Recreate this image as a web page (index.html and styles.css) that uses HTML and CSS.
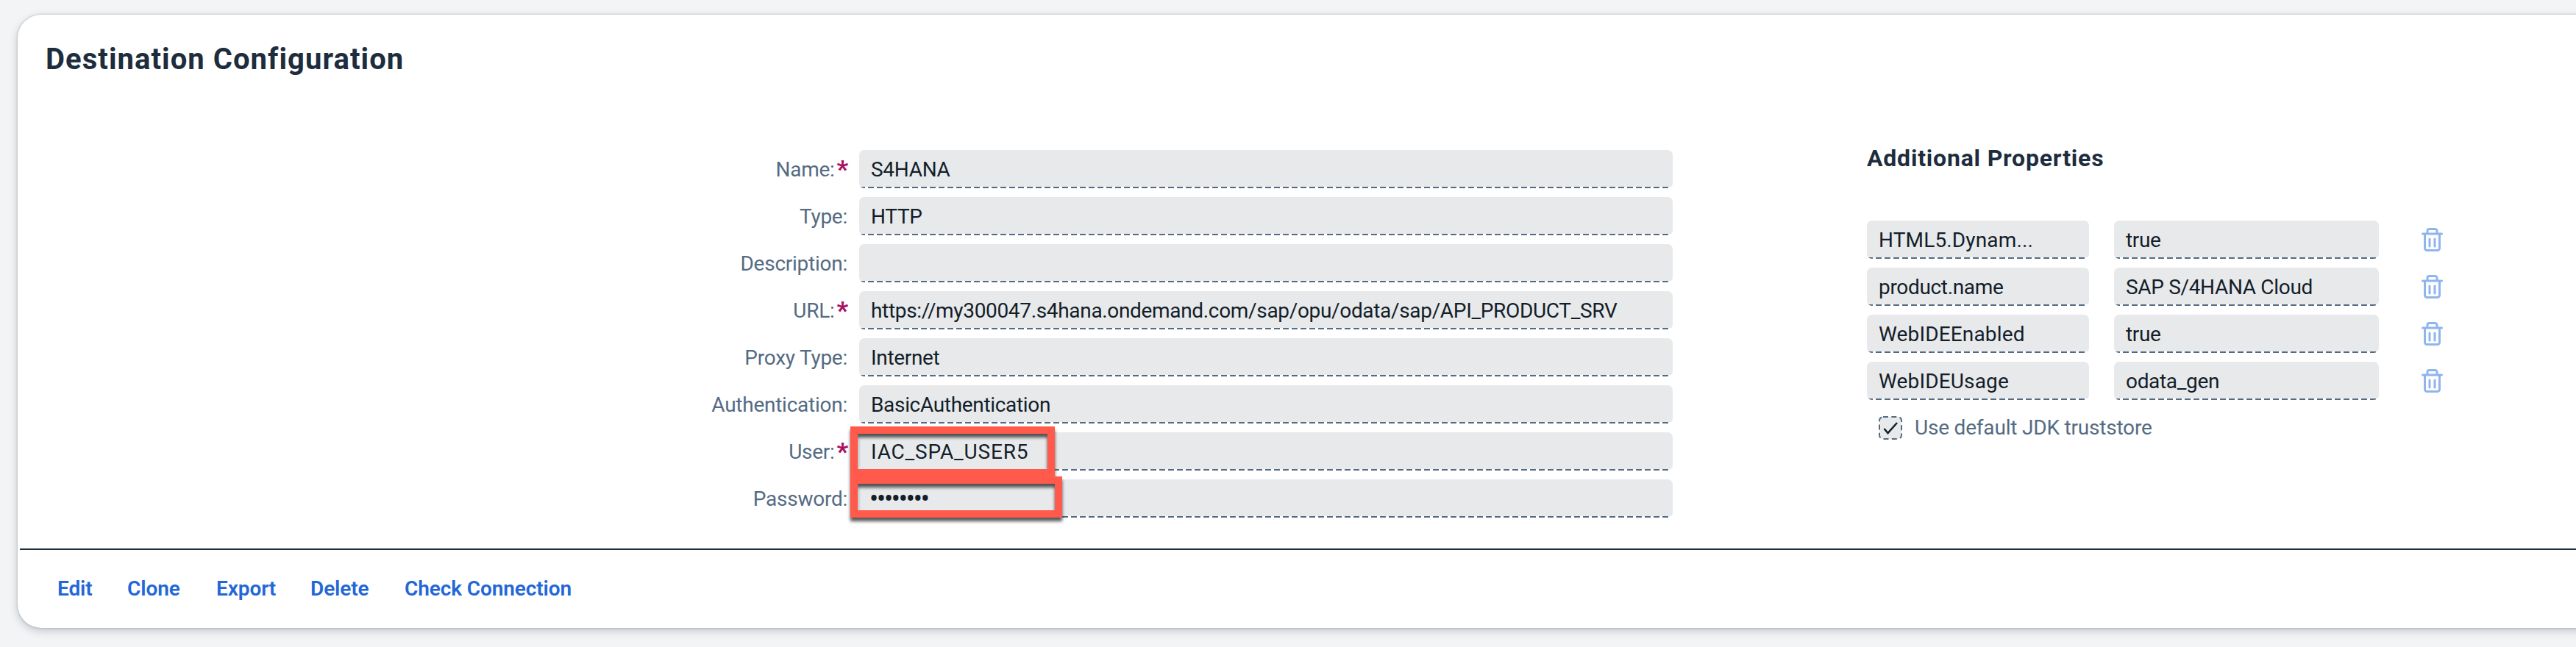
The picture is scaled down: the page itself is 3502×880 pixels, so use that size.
FILE: index.html
```html
<!DOCTYPE html>
<html lang="en">
<head>
<meta charset="utf-8">
<title>Destination Configuration</title>
<link rel="stylesheet" href="styles.css">
</head>
<body>
<svg class="defs" width="0" height="0" aria-hidden="true">
  <symbol id="trash" viewBox="0 0 30 32">
    <path d="M8 8V4a2.500 2.500 0 0 1 2.500-2.500h8A2.500 2.500 0 0 1 21 4v4M1.500 8h26M4.500 8v19.500a3 3 0 0 0 3 3h14a3 3 0 0 0 3-3V8M11 15v10M18 15v10" fill="none" stroke="currentColor" stroke-width="3" stroke-linecap="round"/>
  </symbol>
</svg>
<main class="card">
  <h1 class="title">Destination Configuration</h1>
  <div class="content">
    <section class="form">
      <label class="label required">Name:</label><div class="field caps">S4HANA</div>
      <label class="label">Type:</label><div class="field caps">HTTP</div>
      <label class="label">Description:</label><div class="field"></div>
      <label class="label required">URL:</label><div class="field">https://my300047.s4hana.ondemand.com/sap/opu/odata/sap/API_PRODUCT_SRV</div>
      <label class="label">Proxy Type:</label><div class="field">Internet</div>
      <label class="label">Authentication:</label><div class="field">BasicAuthentication</div>
      <label class="label required">User:</label><div class="field user">IAC_SPA_USER5<span class="mark mark-user"></span></div>
      <label class="label">Password:</label><div class="field password">••••••••<span class="mark mark-password"></span></div>
    </section>
    <section class="props">
      <h2 class="subtitle">Additional Properties</h2>
      <div class="prop-grid">
        <div class="field wide">HTML5.Dynam...</div><div class="field">true</div><svg class="trash"><use href="#trash"/></svg>
        <div class="field">product.name</div><div class="field">SAP S/4HANA Cloud</div><svg class="trash"><use href="#trash"/></svg>
        <div class="field wide">WebIDEEnabled</div><div class="field">true</div><svg class="trash"><use href="#trash"/></svg>
        <div class="field wide">WebIDEUsage</div><div class="field">odata_gen</div><svg class="trash"><use href="#trash"/></svg>
      </div>
      <div class="check">
        <svg class="box" viewBox="0 0 32 32">
          <rect x="1" y="1" width="30" height="30" rx="5" fill="#e8e9eb" stroke="#556b82" stroke-width="2" stroke-dasharray="7 4.300"/>
          <path d="M7.500 17l5 6L25 9" fill="none" stroke="#131e29" stroke-width="2.500"/>
        </svg>
        <span>Use default JDK truststore</span>
      </div>
    </section>
  </div>
  <footer class="actions">
    <a class="edit">Edit</a><a class="clone">Clone</a><a class="export">Export</a><a class="delete">Delete</a><a>Check Connection</a>
  </footer>
</main>
</body>
</html>
```
FILE: styles.css
```css
* { box-sizing: border-box; }
body {
  margin: 0;
  height: 880px;
  padding: 20px 0 0 24px;
  overflow: hidden;
  background: #f3f4f6;
  font: 28px/53px Roboto, "Open Sans", sans-serif;
  color: #1d2d3e;
}
.defs { display: block; height: 0; }
.card {
  height: 834px;
  margin-right: -20px;
  display: flex;
  flex-direction: column;
  border-radius: 32px 0 0 32px;
  background: #fff;
  box-shadow: 0 0 3px rgba(34, 53, 72, .3), 0 4px 12px rgba(34, 53, 72, .24);
}
.title {
  margin: 0;
  height: 184px;
  padding: 34px 0 0 38px;
  font-size: 40px;
  line-height: 53px;
  letter-spacing: 1.050px;
}
.content {
  display: flex;
  align-items: flex-start;
  gap: 264px;
  padding-left: 904px;
  height: 541px;
}
.form {
  display: grid;
  grid-template-columns: 225px 1106px;
  grid-auto-rows: 52px;
  column-gap: 15px;
  row-gap: 12px;
}
.label {
  text-align: right;
  color: #556b82;
  letter-spacing: -.25px;
  margin-right: 1px;
}
.required::after {
  content: "*";
  display: inline-block;
  height: 52px;
  margin-left: 3px;
  vertical-align: top;
  color: #aa0f62;
  font-size: 34px;
  font-weight: 800;
  line-height: 52px;
}
.required { margin-right: 0; }
.field {
  position: relative;
  height: 52px;
  padding-left: 16px;
  border-radius: 7px;
  color: #131e29;
  letter-spacing: -.33px;
  white-space: nowrap;
  background:
    repeating-linear-gradient(90deg, #556b82 0 8px, #fff 8px 12px) 0 100% / 100% 2px no-repeat,
    #e8e9eb;
}
.caps { letter-spacing: -.3px; }
.wide { letter-spacing: .15px; }
.user { letter-spacing: .8px; }
.password { padding-left: 14px; font-size: 36px; letter-spacing: -2.200px; line-height: 54px; }
.mark {
  position: absolute;
  left: -12px;
  border: 10px solid #ff5a4b;
  filter: drop-shadow(0 5px 2px rgba(0, 0, 0, .65));
}
.mark-user { top: -8px; width: 278px; height: 68px; }
.mark-password { top: -4px; width: 288px; height: 56px; }
.props { width: 800px; }
.subtitle {
  margin: 0;
  height: 96px;
  font-size: 32px;
  line-height: 22px;
  letter-spacing: .8px;
}
.prop-grid {
  display: grid;
  grid-template-columns: 302px 360px 60px;
  column-gap: 34px;
  row-gap: 12px;
}
.trash {
  width: 30px;
  height: 32px;
  margin: 10px 0 0 24px;
  color: #8fb5ef;
}
.check {
  display: flex;
  align-items: center;
  gap: 17px;
  margin-top: 11px;
  padding-left: 16px;
  color: #556b82;
  letter-spacing: -.2px;
}
.box { width: 32px; height: 32px; }
.actions {
  display: flex;
  margin: 1px 0 0 3px;
  padding: 0 0 0 51px;
  border-top: 2px solid #1d2d3e;
  color: #2266d8;
  font-weight: 600;
  line-height: 105px;
  letter-spacing: -.1px;
}
.edit { width: 95px; }
.clone { width: 121px; }
.export { width: 128px; }
.delete { width: 128px; }
```
